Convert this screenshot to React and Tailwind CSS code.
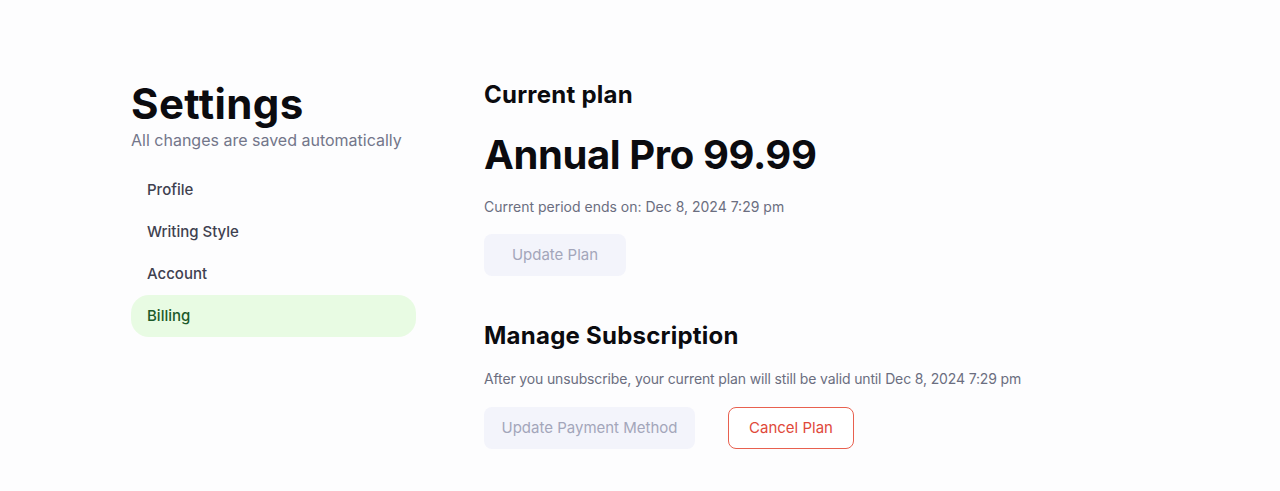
const navItems = ['Profile', 'Writing Style', 'Account', 'Billing'];

function SideNav({ active }) {
  return (
    <nav className="mt-[19px] flex flex-col">
      {navItems.map((item) => (
        <button
          key={item}
          className={
            item === active
              ? 'h-[42px] rounded-[18px] bg-[#e8fbe3] px-4 text-left text-[15px] font-medium text-[#1c5a2a]'
              : 'h-[42px] rounded-[18px] px-4 text-left text-[15px] font-medium text-[#3f4150]'
          }
        >
          {item}
        </button>
      ))}
    </nav>
  );
}

export default function App() {
  return (
    <div
      className="min-h-[491px] bg-[#fdfdfe] text-[#0b0b0f]"
      style={{ fontFamily: 'Inter, "Noto Sans", sans-serif' }}
    >
      <div className="mx-auto flex w-[1018px] gap-[68px] pt-[78px]">
        <aside className="w-[285px] shrink-0">
          <h1 className="text-[42px] font-bold leading-[52px] tracking-[0.01em]">Settings</h1>
          <p className="text-[16px] leading-[20px] text-[#73768a]">All changes are saved automatically</p>
          <SideNav active="Billing" />
        </aside>

        <main className="flex-1">
          <section>
            <h2 className="text-[24px] font-bold leading-[34px] tracking-[0.01em]">Current plan</h2>
            <p className="mt-[17px] text-[40px] font-bold leading-[52px] tracking-[-0.01em]">Annual Pro 99.99</p>
            <p className="mt-[16px] text-[14px] leading-[20px] text-[#6b6e80]">
              Current period ends on: Dec 8, 2024 7:29 pm
            </p>
            <button className="mt-[17px] h-[42px] w-[142px] rounded-[8px] bg-[#f3f4fb] text-[15px] text-[#a3a6ba]">
              Update Plan
            </button>
          </section>

          <section className="mt-[43px]">
            <h2 className="text-[24px] font-bold leading-[34px] tracking-[0.01em]">Manage Subscription</h2>
            <p className="mt-[16px] text-[14px] leading-[20px] tracking-[-0.01em] text-[#6b6e80]">
              After you unsubscribe, your current plan will still be valid until Dec 8, 2024 7:29 pm
            </p>
            <div className="mt-[18px] flex gap-[33px]">
              <button className="h-[42px] w-[211px] rounded-[8px] bg-[#f3f4fb] text-[15px] text-[#a3a6ba]">
                Update Payment Method
              </button>
              <button className="h-[42px] w-[126px] rounded-[8px] border border-[#e8604f] bg-white text-[15px] text-[#e0493a]">
                Cancel Plan
              </button>
            </div>
          </section>
        </main>
      </div>
    </div>
  );
}
